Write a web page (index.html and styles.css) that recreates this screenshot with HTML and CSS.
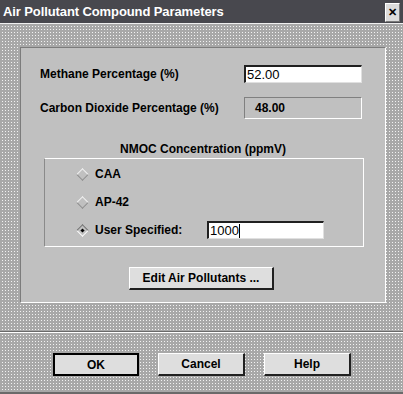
FILE: index.html
```html
<!doctype html>
<html lang="en">
	<head>
		<meta charset="UTF-8">
		<title>Air Pollutant Compound Parameters</title>
		<link rel="stylesheet" href="styles.css">
	</head>
	<body>
		<div class="window">
			<div class="titlebar">
				<span class="title">Air Pollutant Compound Parameters</span>
				<span class="close">&#x2715;</span>
			</div>
			<div class="client">
				<div class="panel">
					<div class="row first">
						<span class="label">Methane Percentage (%)</span>
						<span class="edit methane">52.00</span>
					</div>
					<div class="row second">
						<span class="label">Carbon Dioxide Percentage (%)</span>
						<span class="edit readonly">48.00</span>
					</div>
					<div class="grouptitle">NMOC Concentration (ppmV)</div>
					<div class="group">
						<div class="radio"><span class="diamond"></span><span class="rlabel">CAA</span></div>
						<div class="radio"><span class="diamond"></span><span class="rlabel">AP-42</span></div>
						<div class="radio"><span class="diamond on"></span><span class="rlabel user">User Specified:</span><span class="edit ppm">1000<i class="caret"></i></span></div>
					</div>
					<div class="editrow">
						<span class="btn wide">Edit Air Pollutants ...</span>
					</div>
				</div>
				<div class="sep"></div>
				<div class="buttons">
					<span class="btn default">OK</span>
					<span class="btn">Cancel</span>
					<span class="btn">Help</span>
				</div>
			</div>
		</div>
	</body>
</html>
```

FILE: styles.css
```css
* {
	box-sizing: border-box;
}
body {
	margin: 0;
	font-family: "Liberation Sans", Arial, sans-serif;
	font-weight: bold;
	font-size: 12px;
	color: #000;
}
.window {
	width: 403px;
	height: 394px;
	display: flex;
	flex-direction: column;
	background-color: #c4c4c4;
}
.titlebar {
	height: 24px;
	background-color: #48484e;
	color: #fff;
	display: flex;
	align-items: center;
	justify-content: space-between;
	padding: 0 3px 0 3px;
	border-bottom: 1px solid #f0f0f0;
	flex-shrink: 0;
}
.title {
	font-size: 13px;
	letter-spacing: -0.1px;
}
.close {
	width: 15px;
	height: 19px;
	background-color: #dcdcdc;
	border-top: 1px solid #fff;
	border-left: 1px solid #fff;
	border-right: 1px solid #7a7a7a;
	border-bottom: 1px solid #7a7a7a;
	color: #000;
	font-size: 11px;
	display: flex;
	align-items: center;
	justify-content: center;
	margin-top: 2px;
}
.client {
	flex: 1;
	display: flex;
	flex-direction: column;
	background-color: #f2f2f2;
	background-image:
		linear-gradient(90deg, #a8a8a8 2px, transparent 2px),
		linear-gradient(#a8a8a8 2px, transparent 2px);
	background-size: 3px 3px;
	border-bottom: 2px solid #6a6a6a;
}
.panel {
	margin: 23px 0 0 20px;
	width: 366px;
	height: 256px;
	background-color: #c0c0c0;
	border-top: 1px solid #7c7c7c;
	border-left: 1px solid #7c7c7c;
	border-right: 1px solid #fff;
	border-bottom: 1px solid #fff;
	display: flex;
	flex-direction: column;
}
.row {
	display: flex;
	align-items: center;
	padding-left: 19px;
}
.row.first {
	margin-top: 17px;
	height: 18px;
}
.row.second {
	margin-top: 14px;
	height: 22px;
}
.label {
	width: 204px;
}
.edit {
	display: flex;
	align-items: center;
	background-color: #fff;
	border-top: 2px solid #202020;
	border-left: 2px solid #202020;
	border-right: 1px solid #e0e0e0;
	border-bottom: 1px solid #e0e0e0;
	padding-left: 1px;
	font-weight: normal;
	font-size: 13px;
}
.methane {
	width: 118px;
	height: 18px;
}
.readonly {
	width: 118px;
	height: 22px;
	background-color: #c0c0c0;
	border-top: 1px solid #808080;
	border-left: 1px solid #808080;
	border-right: 1px solid #fff;
	border-bottom: 1px solid #fff;
	padding-left: 10px;
	font-weight: bold;
	font-size: 12px;
}
.grouptitle {
	margin-top: 23px;
	text-align: center;
	height: 14px;
	line-height: 14px;
}
.group {
	margin: 2px 0 0 23px;
	width: 320px;
	height: 89px;
	border-top: 1px solid #fff;
	border-left: 1px solid #8a8a8a;
	border-right: 1px solid #fff;
	border-bottom: 1px solid #fff;
	display: flex;
	flex-direction: column;
	padding: 6px 0 0 33px;
	gap: 10px;
}
.radio {
	display: flex;
	align-items: center;
	height: 18px;
}
.diamond {
	width: 9px;
	height: 9px;
	transform: rotate(45deg);
	background-color: #c0c0c0;
	border-top: 1px solid #f4f4f4;
	border-left: 1px solid #f4f4f4;
	border-right: 1px solid #8c8c8c;
	border-bottom: 1px solid #8c8c8c;
	margin-right: 8px;
	display: flex;
	align-items: center;
	justify-content: center;
}
.diamond.on {
	border-top-color: #707070;
	border-left-color: #707070;
	border-right-color: #fff;
	border-bottom-color: #fff;
}
.diamond.on::after {
	content: "";
	width: 3px;
	height: 3px;
	background-color: #000;
}
.user {
	width: 112px;
}
.ppm {
	width: 117px;
	height: 18px;
}
.caret {
	display: inline-block;
	width: 1px;
	height: 14px;
	background-color: #000;
}
.editrow {
	margin-top: 20px;
	padding-left: 108px;
}
.btn {
	display: inline-flex;
	align-items: center;
	justify-content: center;
	height: 23px;
	width: 87px;
	background-color: #dedede;
	border-top: 1px solid #fff;
	border-left: 1px solid #fff;
	border-right: 2px solid #202020;
	border-bottom: 2px solid #202020;
	font-size: 12px;
}
.btn.wide {
	width: 145px;
	height: 23px;
}
.btn.default {
	width: 86px;
	border: 2px solid #000;
}
.sep {
	margin-top: 28px;
	border-top: 1px solid #6a6a6a;
	border-bottom: 1px solid #fff;
}
.buttons {
	margin-top: 20px;
	display: flex;
	gap: 19px;
	padding-left: 53px;
}
```
